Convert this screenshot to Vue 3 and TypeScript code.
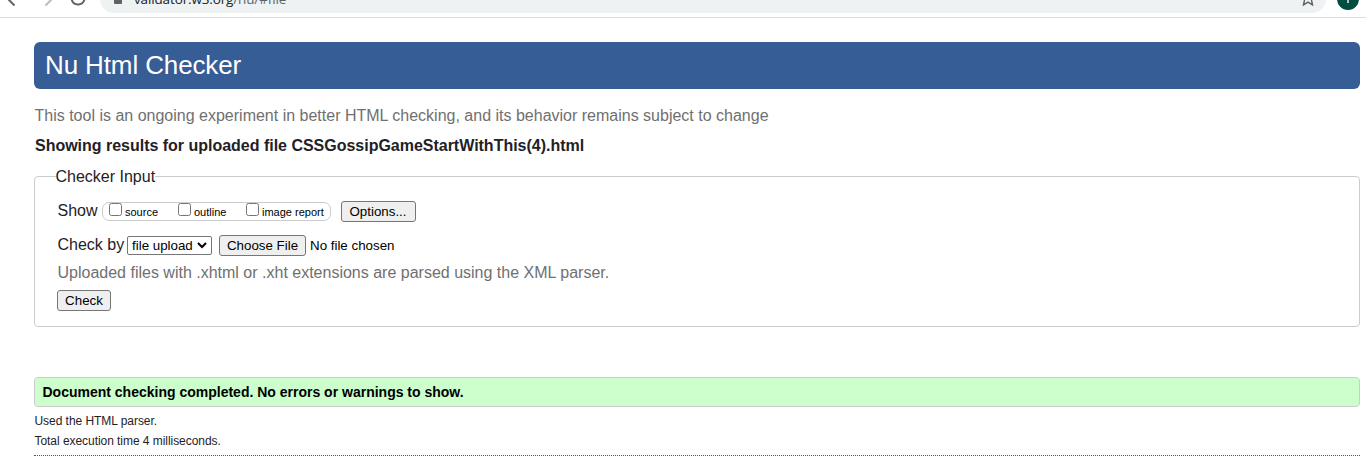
<script setup lang="ts">
import { ref } from 'vue'

interface ShowOption {
  id: string
  label: string
  checked: boolean
}

const address = { host: 'validator.w3.org', path: '/nu/#file' }
const showOptions = ref<ShowOption[]>([
  { id: 'source', label: 'source', checked: false },
  { id: 'outline', label: 'outline', checked: false },
  { id: 'image', label: 'image report', checked: false },
])
const stats: string[] = ['Used the HTML parser.', 'Total execution time 4 milliseconds.']
</script>

<template>
  <div class="window">
    <header class="toolbar">
      <svg class="nav" width="100" height="17" viewBox="0 0 100 17" fill="none" stroke-width="2">
        <path d="M7 -2 14.5 5.5" stroke="#5f6368" />
        <path d="M53 -2 45.5 5.5" stroke="#babcbe" />
        <path d="M71.6 -1A6.6 6.6 0 0 0 84.4 -0.2" stroke="#5f6368" />
      </svg>
      <div class="address">
        <svg class="lock" width="8" height="4" viewBox="0 0 8 4"><path d="M0 0H8V3Q8 4 7 4H1Q0 4 0 3Z" fill="#5f6368" /></svg>
        <span class="url">{{ address.host }}<span class="path">{{ address.path }}</span></span>
        <svg class="star" width="12" height="6" viewBox="0 0 12 6" fill="none" stroke="#5f6368" stroke-width="1.4">
          <path d="M2.7 -1 1.5 4.9 6 2.1 10.5 4.9 9.3 -1" />
        </svg>
      </div>
      <div class="avatar"><i></i></div>
    </header>

    <main class="page">
      <h1 class="banner"><span>Nu Html Checker</span></h1>
      <p class="notice"><span>This tool is an ongoing experiment in better HTML checking, and its behavior remains subject to change</span></p>
      <h2 class="heading"><span>Showing results for uploaded file CSSGossipGameStartWithThis(4).html</span></h2>

      <fieldset class="inputs">
        <legend>Checker Input</legend>
        <div class="row show-row">
          <span class="label show-label">Show</span>
          <div class="show-group">
            <label v-for="o in showOptions" :key="o.id" :class="['option', o.id]">
              <input v-model="o.checked" type="checkbox" />
              <span>{{ o.label }}</span>
            </label>
          </div>
          <button type="button" class="btn options">Options...</button>
        </div>
        <div class="row by-row">
          <span class="label by-label">Check by</span>
          <div class="select">
            <span>file upload</span>
            <svg width="10" height="7" viewBox="0 0 10 7" fill="none" stroke="#000" stroke-width="2"><path d="M1 1 5 5 9 1" /></svg>
          </div>
          <button type="button" class="btn choose">Choose File</button>
          <span class="file-name">No file chosen</span>
        </div>
        <p class="hint"><span>Uploaded files with .xhtml or .xht extensions are parsed using the XML parser.</span></p>
        <button type="button" class="btn check">Check</button>
      </fieldset>

      <p class="success"><span>Document checking completed. No errors or warnings to show.</span></p>
      <div class="stats">
        <p v-for="s in stats" :key="s"><span>{{ s }}</span></p>
      </div>
    </main>
  </div>
</template>

<style>
body {
  background: #fff;
  overflow: hidden;
}
</style>

<style scoped>
.window {
  height: 459px;
  overflow: hidden;
  font-family: "Liberation Sans", Arial, sans-serif;
  font-size: 16px;
  color: #1f2126;
}
h1, h2, p {
  margin: 0;
  font-weight: normal;
}
.toolbar {
  display: flex;
  align-items: flex-start;
  height: 17px;
  overflow: hidden;
  border-bottom: 1px solid #d9dbde;
}
.nav {
  flex: none;
}
.address {
  display: flex;
  align-items: flex-start;
  box-sizing: border-box;
  flex: none;
  width: 1226px;
  height: 28px;
  margin-top: -15px;
  padding: 15px 12px 0 14px;
  border-radius: 14px;
  background: #eef2f3;
}
.lock {
  flex: none;
}
.url {
  margin: -10px 0 0 12px;
  font: 13.5px/18px "Open Sans", "Noto Sans", sans-serif;
  letter-spacing: -0.14px;
  color: #202124;
  white-space: nowrap;
}
.path {
  color: #5f6368;
}
.star {
  margin-left: auto;
}
.avatar {
  display: flex;
  justify-content: center;
  flex: none;
  width: 22px;
  height: 22px;
  margin: -12px 0 0 11px;
  border-radius: 50%;
  background: #004d40;
}
.avatar i {
  width: 1.5px;
  height: 4px;
  margin-top: 11px;
  background: #a9c5c0;
}
.page {
  margin: 24px 6px 0 34px;
}
.banner {
  height: 47px;
  padding-left: 11px;
  border-radius: 6px;
  background: #365d95;
  color: #fff;
  font-size: 26px;
  letter-spacing: -0.12px;
  line-height: 46px;
}
.notice {
  margin-top: 17px;
  padding-left: 0.5px;
  line-height: 20px;
  color: #707070;
}
.heading {
  margin-top: 10px;
  padding-left: 1px;
  font-size: 16px;
  font-weight: bold;
  letter-spacing: -0.015px;
  line-height: 20px;
}
.inputs {
  box-sizing: border-box;
  height: 159px;
  margin: 12px 0 0;
  padding: 16px 22px 0;
  border: 1px solid #ccc;
  border-radius: 4px;
  min-width: 0;
}
.inputs legend {
  height: 17px;
  margin-left: -1.5px;
  padding: 0;
  line-height: 18px;
}
.row {
  display: flex;
  align-items: center;
}
.show-row {
  height: 21px;
}
.label {
  margin-top: -2px;
  padding-left: 0.5px;
  box-sizing: border-box;
  line-height: 20px;
  white-space: nowrap;
}
.show-label {
  width: 45px;
}
.show-group {
  display: flex;
  box-sizing: border-box;
  width: 229px;
  height: 19px;
  padding-left: 6px;
  border: 1px solid #ccc;
  border-radius: 7px;
}
.option {
  display: flex;
  font-size: 11px;
  line-height: 19px;
  white-space: nowrap;
  color: #000;
}
.option.source {
  width: 69px;
}
.option.outline {
  width: 68px;
}
.option input {
  appearance: none;
  flex: none;
  box-sizing: border-box;
  width: 13px;
  height: 13px;
  margin: 0 3px 0 0;
  border: 1px solid #767676;
  border-radius: 2.5px;
  background: #fff;
}
.option input:checked {
  background: #0075ff;
}
.btn {
  box-sizing: border-box;
  height: 21px;
  padding: 0;
  border: 1px solid #767676;
  border-radius: 3px;
  background: #efefef;
  color: #000;
  font: 13.333px/19px "Liberation Sans", Arial, sans-serif;
  text-align: center;
  white-space: nowrap;
}
.options {
  width: 75px;
  margin-left: 10px;
  padding-right: 1px;
}
.by-row {
  height: 21px;
  margin-top: 13px;
}
.by-label {
  width: 70px;
}
.select {
  display: flex;
  align-items: center;
  justify-content: space-between;
  box-sizing: border-box;
  width: 85px;
  height: 19px;
  padding: 0 4px;
  border: 1px solid #767676;
  border-radius: 2px;
  font-size: 13.333px;
  line-height: 17px;
  color: #000;
}
.choose {
  width: 87px;
  margin-left: 7px;
}
.file-name {
  margin-left: 4px;
  font-size: 13.333px;
  color: #000;
}
.hint {
  margin-top: 7px;
  padding-left: 0.5px;
  line-height: 20px;
  color: #707070;
}
.check {
  display: block;
  width: 54px;
  margin-top: 7px;
}
.success {
  box-sizing: border-box;
  height: 30px;
  margin-top: 50px;
  padding-left: 7.5px;
  border: 1px solid #ccc;
  border-radius: 4px;
  background: #cfc;
  color: #000;
  font-size: 14px;
  font-weight: bold;
  line-height: 28px;
}
.stats {
  box-sizing: border-box;
  height: 49px;
  padding: 4px 0 0 0.5px;
  border-bottom: 1px dotted #555;
  font-size: 12px;
  letter-spacing: -0.05px;
  line-height: 20px;
}
</style>
